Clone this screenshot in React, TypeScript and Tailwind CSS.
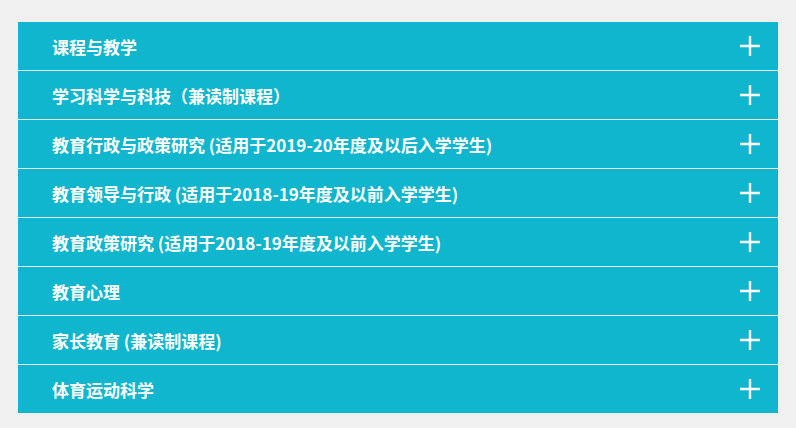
import { useState } from "react";

const programmes = [
  "课程与教学",
  "学习科学与科技（兼读制课程）",
  "教育行政与政策研究 (适用于2019-20年度及以后入学学生)",
  "教育领导与行政 (适用于2018-19年度及以前入学学生)",
  "教育政策研究 (适用于2018-19年度及以前入学学生)",
  "教育心理",
  "家长教育 (兼读制课程)",
  "体育运动科学",
];

function PlusIcon() {
  return (
    <svg width="22" height="22" viewBox="0 0 22 22" className="shrink-0">
      <path d="M11 1v20M1 11h20" stroke="#ffffff" strokeWidth="2.4" />
    </svg>
  );
}

export default function App() {
  const [open, setOpen] = useState<number | null>(null);

  return (
    <div className="min-h-screen w-full bg-[#f0f0f0] pt-[22px] px-[18px]">
      <div className="w-[760px] bg-[#0fb6ce]">
        {programmes.map((title, i) => (
          <div
            key={i}
            className={i < programmes.length - 1 ? "border-b border-white/90" : ""}
          >
            <button
              onClick={() => setOpen(open === i ? null : i)}
              className="w-full h-[48px] flex items-center justify-between pl-[34px] pr-[17px] text-left"
            >
              <span
                className="text-white text-[17px] font-bold leading-none"
                style={{ fontFamily: '"Noto Sans CJK SC", "Noto Sans", sans-serif' }}
              >
                {title}
              </span>
              <PlusIcon />
            </button>
          </div>
        ))}
      </div>
    </div>
  );
}
